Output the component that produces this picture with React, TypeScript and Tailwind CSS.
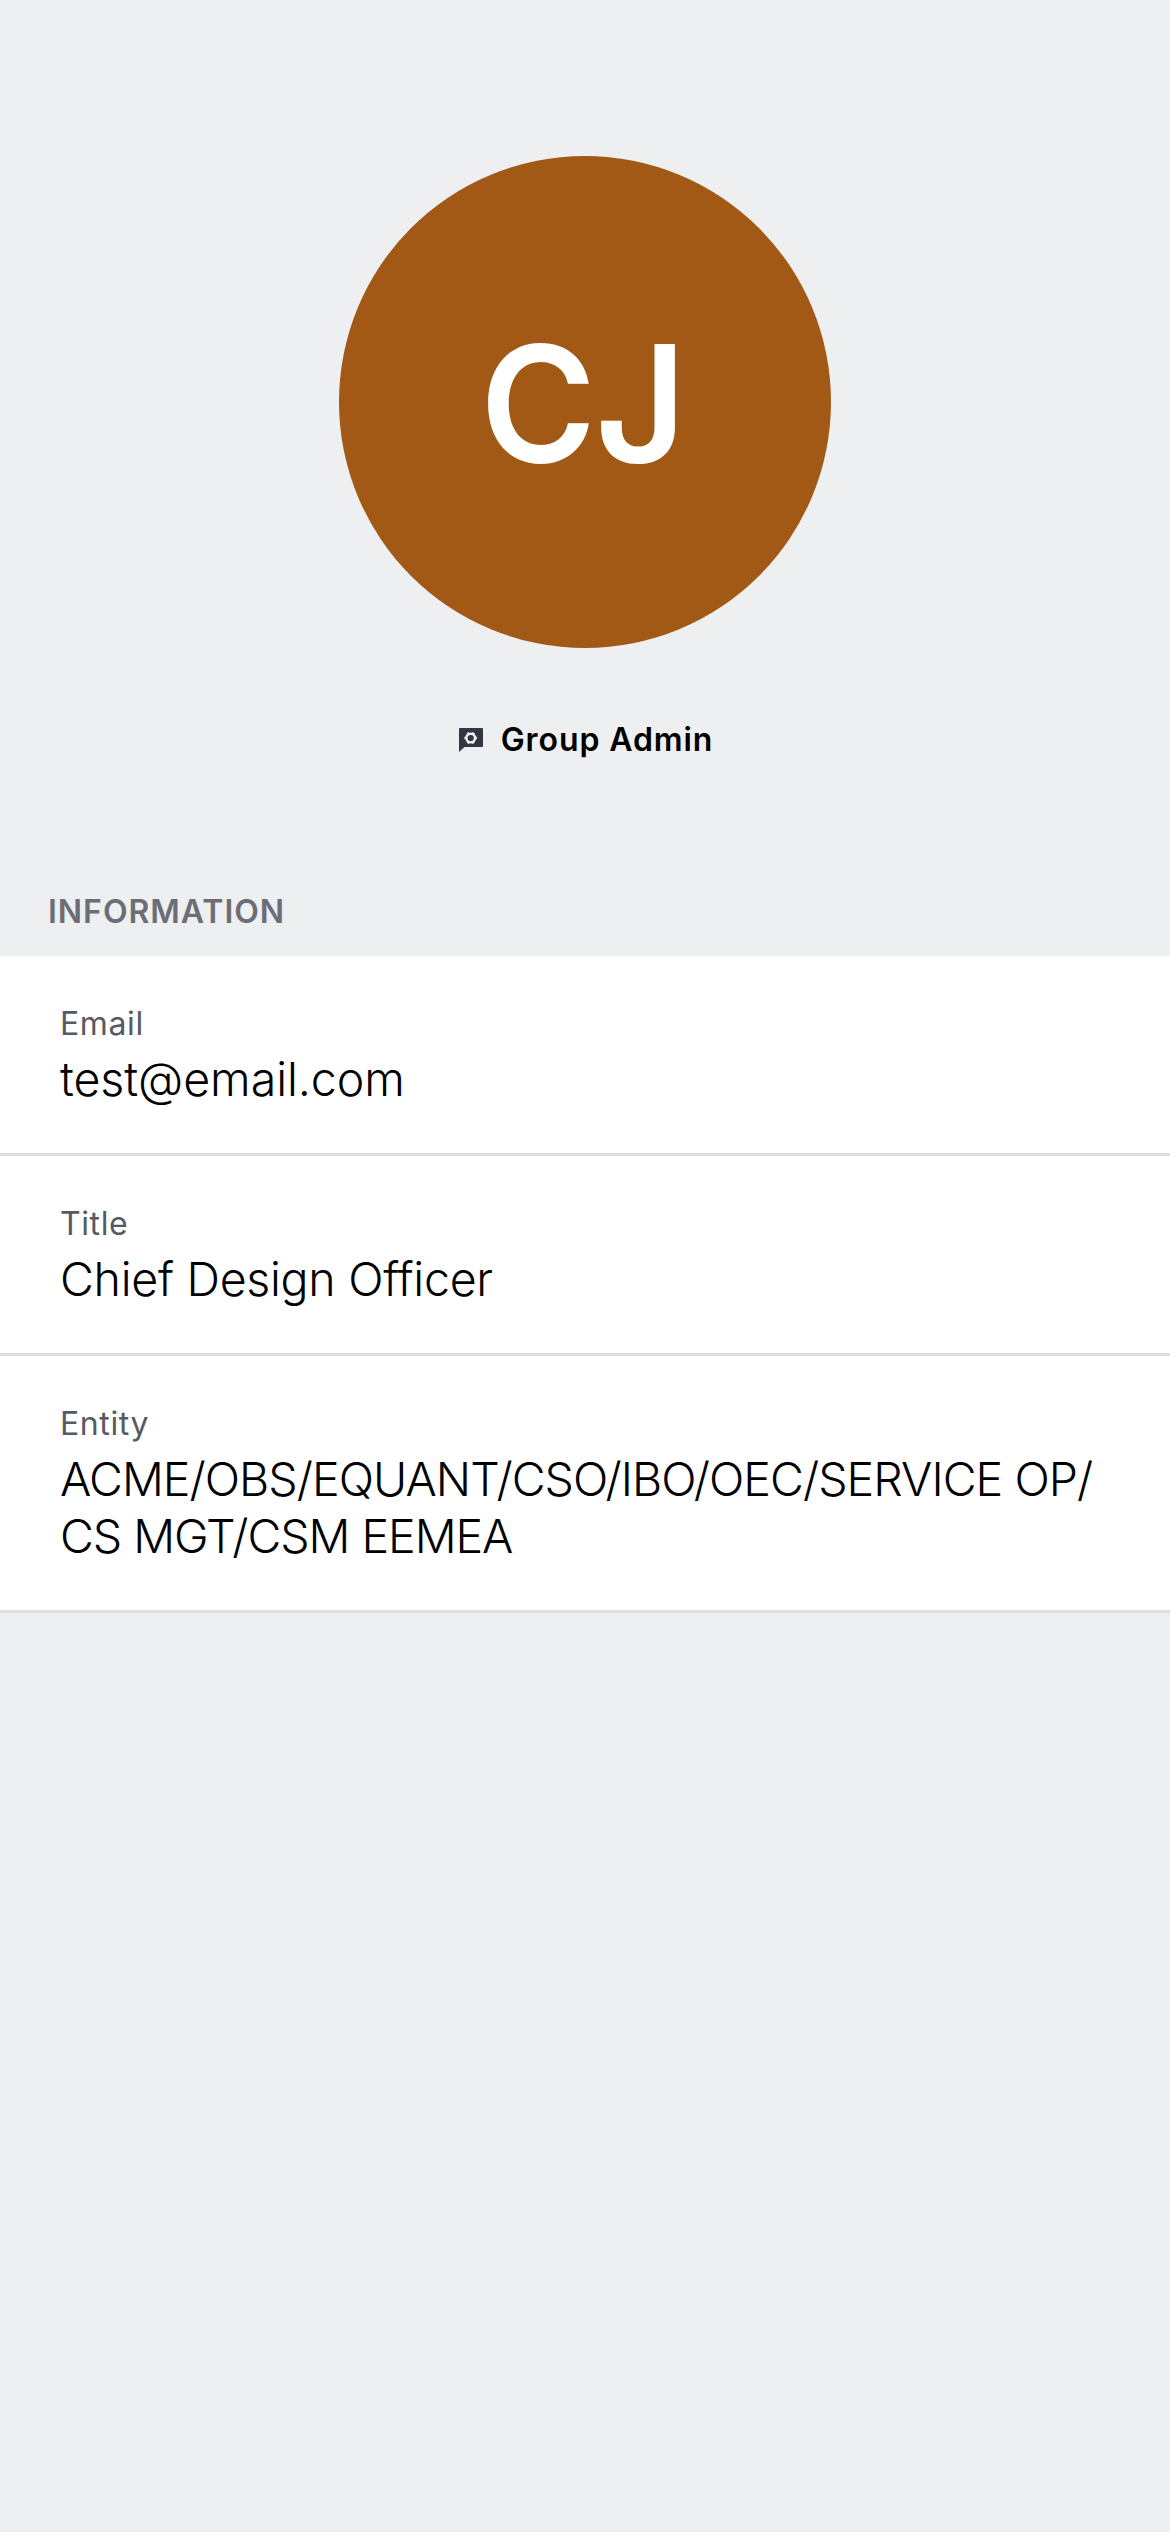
const rows = [
  { label: "Email", lines: [["test@email.com", "tracking-[-0.05px]"]] },
  { label: "Title", lines: [["Chief Design Officer", "tracking-[-0.28px]"]] },
  {
    label: "Entity",
    lines: [
      ["ACME/OBS/EQUANT/CSO/IBO/OEC/SERVICE OP/", "tracking-[-0.95px]"],
      ["CS MGT/CSM EEMEA", "tracking-[-1.05px]"],
    ],
  },
];

function AdminIcon() {
  return (
    <svg width="24" height="24" viewBox="0 0 24 24" fill="none">
      <path d="M1 0h22a1 1 0 0 1 1 1v17a1 1 0 0 1-1 1H5.5L0 24V1a1 1 0 0 1 1-1z" fill="#343741" />
      <circle cx="11.7" cy="10" r="4.3" stroke="#eeeff1" strokeWidth="2.4" />
      <path
        d="M9.6 6.2 8.7 4.6M13.8 6.2l.9-1.6M16 10h2M13.8 13.8l.9 1.6M9.6 13.8l-.9 1.6M7.4 10h-2"
        stroke="#eeeff1"
        strokeWidth="2.6"
      />
    </svg>
  );
}

export default function App() {
  return (
    <main className="flex h-[2532px] w-[1170px] flex-col bg-[#eeeff1] font-['Inter',sans-serif] text-black">
      <header className="flex flex-col items-center pt-[156px]">
        <div className="flex size-[492px] items-center justify-center rounded-full bg-[#a15915] text-[162px] font-semibold tracking-[-0.8px] text-white">
          <span className="-translate-x-[2px] translate-y-px scale-x-[0.97]">CJ</span>
        </div>
        <div className="mt-[72px] flex h-[40px] items-center gap-[18px] pl-[2px] text-[32px] leading-[40px] font-semibold tracking-[0.9px]">
          <AdminIcon />
          <span>Group Admin</span>
        </div>
      </header>
      <h2 className="mt-[132px] ml-12 h-[64px] text-[32px] leading-[40px] font-semibold tracking-[0.98px] text-[#6b6e76]">
        INFORMATION
      </h2>
      <section className="bg-white">
        {rows.map((r) => (
          <div key={r.label} className="border-b-[3px] border-[#dcdfe1] px-[60px] pt-[48px] pb-[45px]">
            <div className="text-[32px] leading-[40px] tracking-[0.6px] text-[#565a62]">{r.label}</div>
            <div className="mt-[7px] text-[46.5px] leading-[57px] font-light whitespace-nowrap">
              {r.lines.map(([line, tracking]) => (
                <div key={line} className={tracking}>
                  {line}
                </div>
              ))}
            </div>
          </div>
        ))}
      </section>
    </main>
  );
}
